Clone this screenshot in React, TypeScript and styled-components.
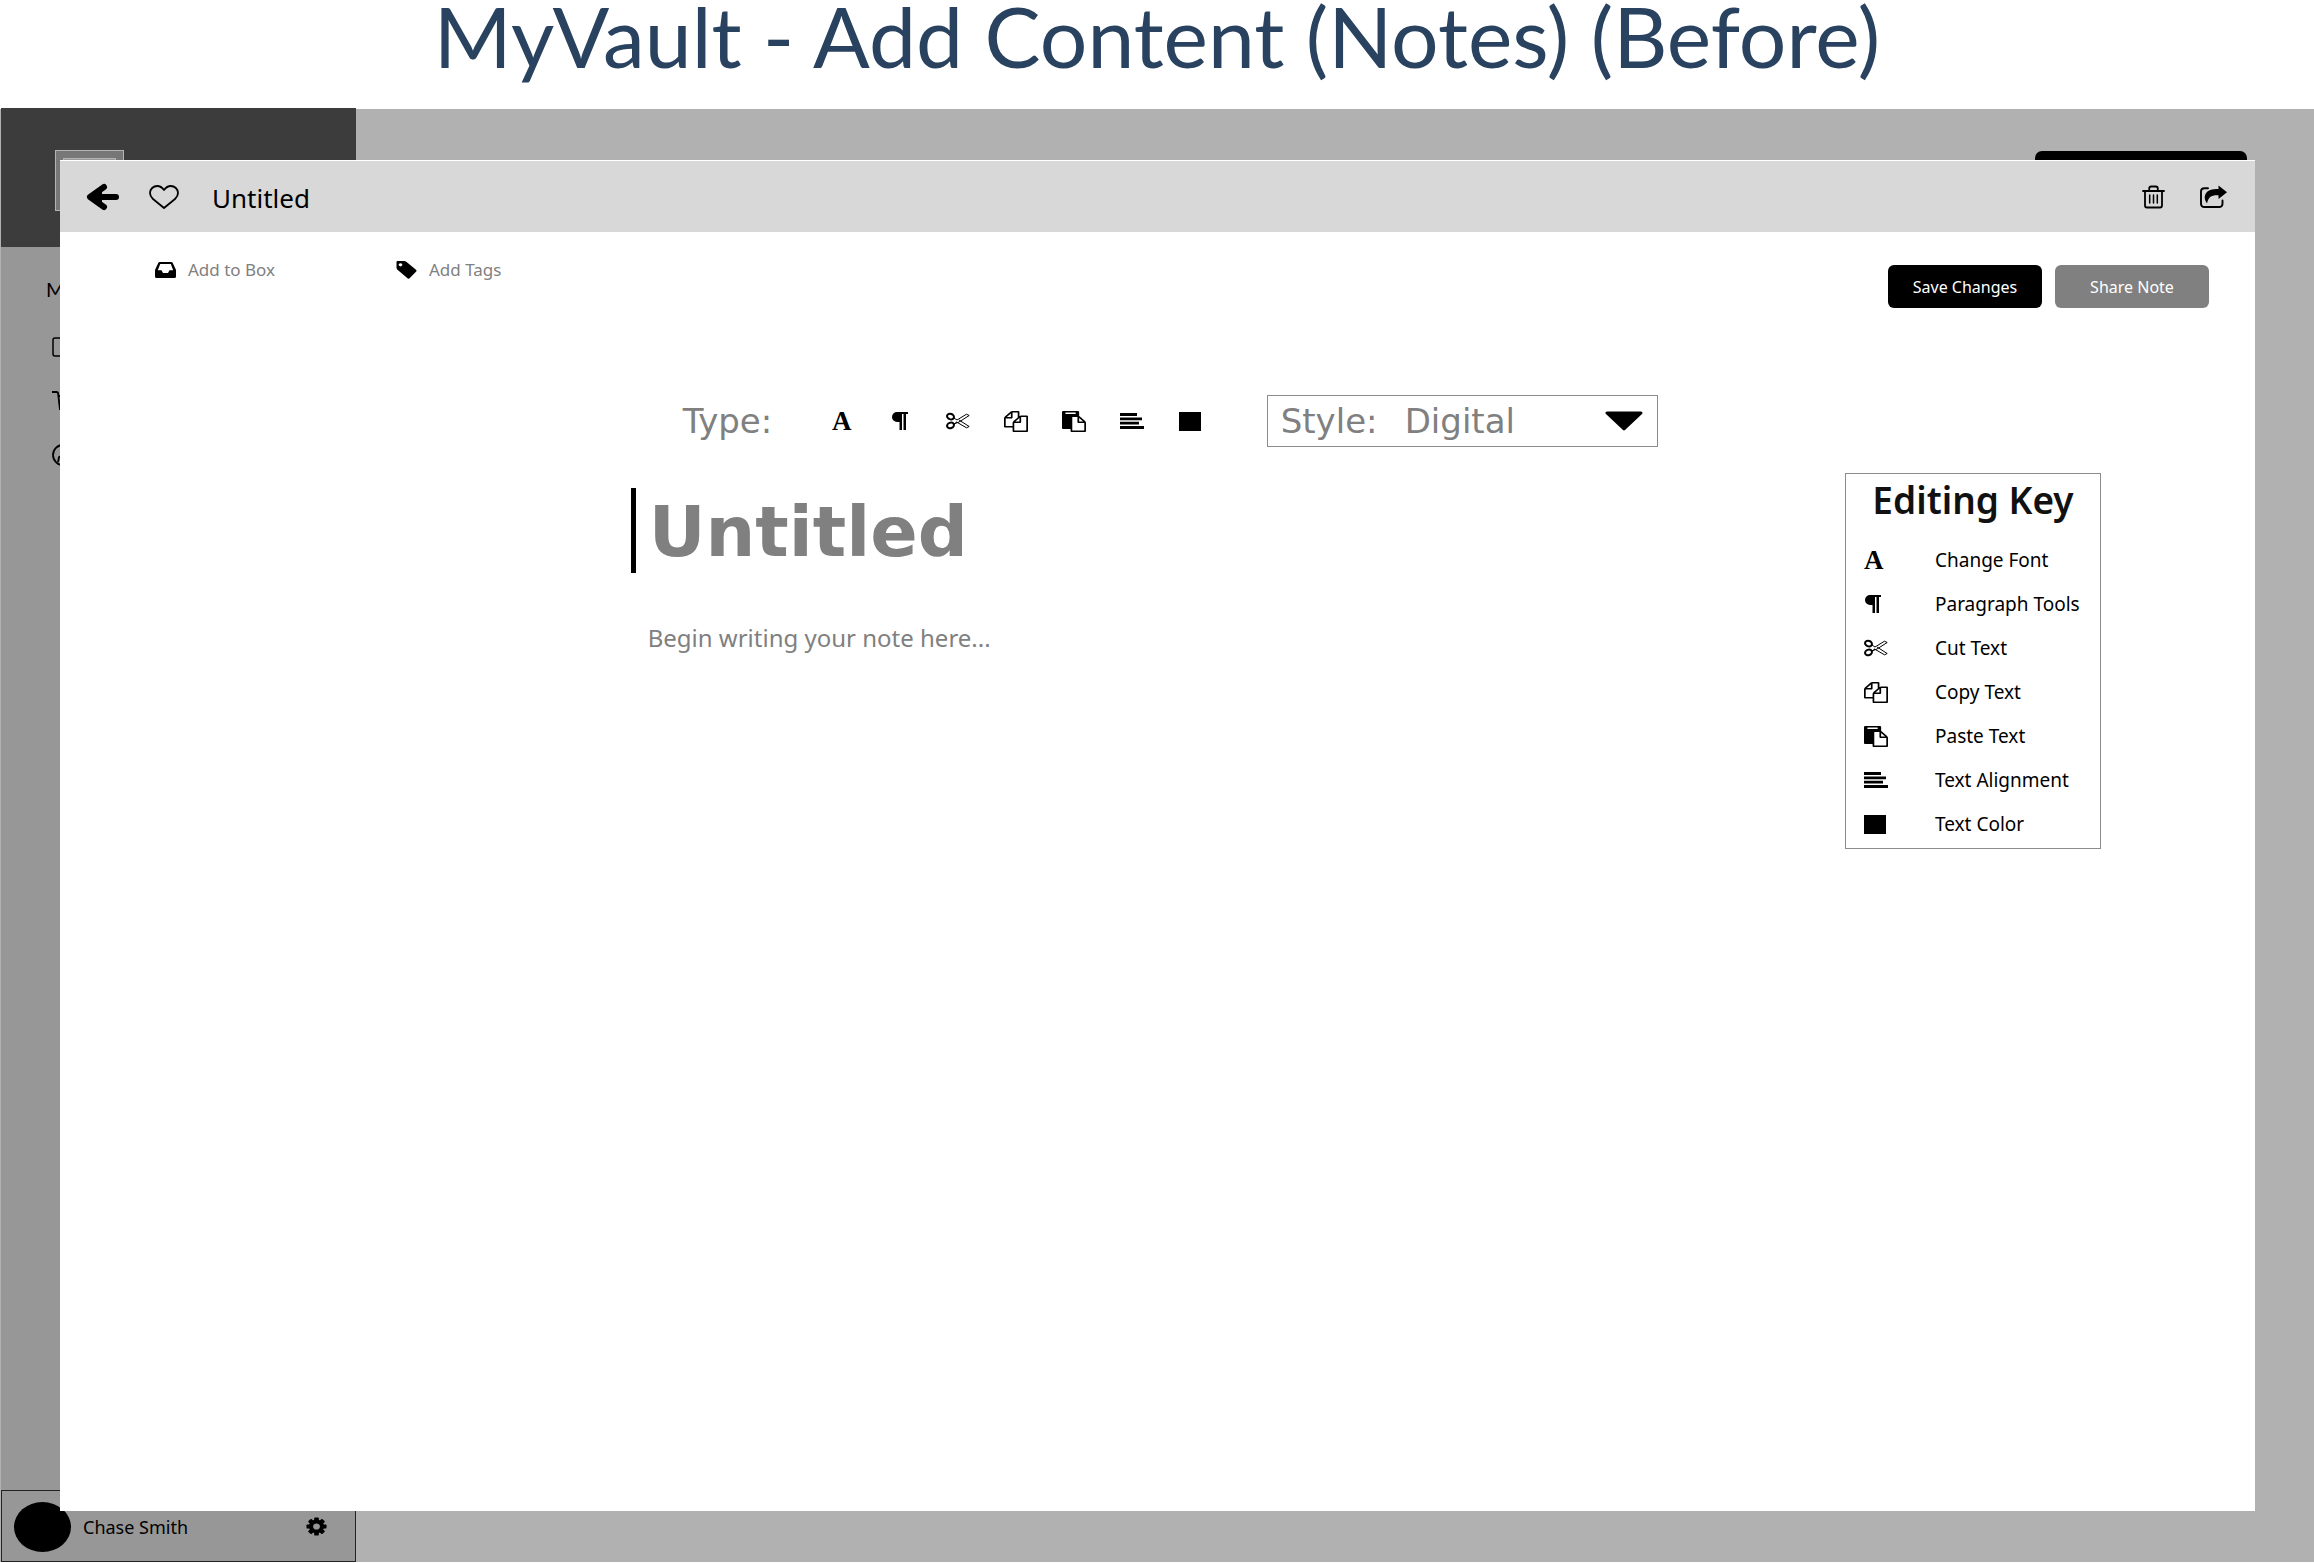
import React from 'react';
import styled, { createGlobalStyle } from 'styled-components';

const GlobalStyle = createGlobalStyle`
  *, *::before, *::after { box-sizing: border-box; }
  html, body, #root { margin: 0; height: 100%; }
  body { background: #fff; color: #000; font-family: "Noto Sans", sans-serif; }
  button, input, select, textarea { font: inherit; color: inherit; }
  svg { display: block; flex: none; }
`;

const ink = '#808080';

const Page = styled.div`
  min-height: 100%;
  display: flex;
  flex-direction: column;
  padding-bottom: 1px;
`;

const PageTitle = styled.h1`
  margin: 0;
  height: 108px;
  line-height: 72px;
  font-family: Lato, sans-serif;
  font-size: 84px;
  font-weight: 400;
  color: #29425f;
  text-align: center;
  white-space: nowrap;
`;

const Stage = styled.div`
  position: relative;
  flex: 1;
  display: flex;
  background: linear-gradient(#fff 1px, #b1b1b1 1px);
`;

const Sidebar = styled.aside`
  width: 355px;
  margin-left: 1px;
  display: flex;
  flex-direction: column;
  background: #979797;
`;

const Brand = styled.div`
  height: 139px;
  padding: 42px 54px;
  background: #3c3c3c;
`;

const Logo = styled.div`
  width: 69px;
  height: 61px;
  padding: 7px;
  border: 1px solid #b4b4b4;
  background: #777;
  &::before {
    content: '';
    display: block;
    height: 46px;
    border: 1px solid #b4b4b4;
    background: #999;
  }
`;

const Nav = styled.nav`
  flex: 1;
  padding: 28px 45px;
  display: flex;
  flex-direction: column;
  gap: 26px;
`;

const NavTitle = styled.span`
  margin-bottom: 4px;
  font-family: Lato, sans-serif;
  font-size: 20px;
  line-height: 28px;
`;

const NavLink = styled.a`
  display: flex;
  height: 28px;
  padding-left: 6px;
  align-items: center;
`;

const Account = styled.div`
  height: 72px;
  padding: 1px 28px 0 12px;
  display: flex;
  align-items: center;
  border: 1px solid #222;
`;

const Avatar = styled.span`
  width: 57px;
  height: 50px;
  margin-right: 12px;
  border-radius: 50%;
  background: #000;
`;

const AccountName = styled.span`
  flex: 1;
  font-size: 18px;
  line-height: 24px;
`;

const Canvas = styled.main`
  flex: 1;
  display: flex;
  justify-content: flex-end;
  align-items: flex-start;
  padding: 43px 67px;
`;

const CanvasAction = styled.button`
  width: 212px;
  height: 42px;
  border: 0;
  border-radius: 7px;
  background: #000;
`;

const Modal = styled.section`
  position: absolute;
  inset: 52px 59px 51px 60px;
  display: flex;
  flex-direction: column;
  border-top: 1px solid #fff;
  background: #fff;
`;

const ModalBar = styled.header`
  height: 71px;
  padding: 0 28px 0 25px;
  display: flex;
  align-items: center;
  background: #d8d8d8;
`;

const IconButton = styled.button`
  display: flex;
  align-items: center;
  justify-content: center;
  padding: 0;
  border: 0;
  background: none;
  cursor: pointer;
`;

const BarGroup = styled.div<{ $gap: number }>`
  display: flex;
  align-items: center;
  gap: ${(p) => p.$gap}px;
`;

const BarTitle = styled.h2`
  flex: 1;
  margin: 0;
  padding: 2px 0 0 33px;
  font-size: 26px;
  line-height: 32px;
  font-weight: 400;
`;

const MetaRow = styled.div`
  padding: 26px 46px 0 95px;
  display: flex;
  align-items: flex-start;
  justify-content: space-between;
`;

const MetaLinks = styled.div`
  display: flex;
`;

const MetaLink = styled.a`
  width: 241px;
  display: flex;
  align-items: center;
  gap: 12px;
  font-size: 17px;
  line-height: 24px;
  color: ${ink};
  text-decoration: none;
  svg { color: #000; }
`;

const Actions = styled.div`
  display: flex;
  gap: 13px;
  padding-top: 7px;
`;

const ActionButton = styled.button<{ $tone: string }>`
  width: 154px;
  height: 43px;
  padding: 0;
  border: 0;
  border-radius: 6px;
  background: ${(p) => p.$tone};
  color: #fff;
  font-size: 16px;
  cursor: pointer;
`;

const Workspace = styled.div`
  flex: 1;
  padding-top: 87px;
  display: grid;
  grid-template-columns: 26% 1fr 410px;
`;

const Editor = styled.div`
  grid-column: 2;
  display: flex;
  flex-direction: column;
  align-items: flex-start;
`;

const Toolbar = styled.div`
  height: 52px;
  padding-left: 52px;
  display: flex;
  align-items: center;
  font-family: "DejaVu Sans", sans-serif;
  font-size: 34px;
  line-height: 48px;
  color: ${ink};
`;

const TypeLabel = styled.span`
  width: 147px;
`;

const Tools = styled.div`
  display: flex;
  gap: 34px;
  margin-right: 65px;
  color: #000;
`;

const ToolButton = styled(IconButton)`
  width: 24px;
  height: 24px;
`;

const StyleField = styled.label`
  width: 391px;
  height: 52px;
  padding: 0 14px 0 13px;
  display: grid;
  grid-template-columns: 124px 1fr 38px;
  align-items: center;
  border: 1px solid #8c8c8c;
`;

const StyleSelect = styled.select`
  width: 100%;
  height: 48px;
  padding: 0;
  appearance: none;
  border: 0;
  background: none;
  line-height: 48px;
`;

const TitleInput = styled.input`
  width: 100%;
  height: 85px;
  margin-top: 41px;
  padding: 2px 0 0 13px;
  border: 0;
  border-left: 5px solid #000;
  background: none;
  font-family: "DejaVu Sans", sans-serif;
  font-size: 70px;
  font-weight: 700;
  color: ${ink};
  &::placeholder { color: ${ink}; opacity: 1; }
`;

const NoteInput = styled.textarea`
  width: 100%;
  flex: 1;
  margin-top: 49px;
  padding: 0 0 0 17px;
  border: 0;
  resize: none;
  background: none;
  font-size: 24px;
  line-height: 32px;
  &::placeholder { color: ${ink}; opacity: 1; }
`;

const KeyPanel = styled.aside`
  align-self: start;
  margin: 78px 154px 0 0;
  padding: 5px 0 2px 18px;
  border: 1px solid #8c8c8c;
`;

const KeyTitle = styled.h3`
  margin: 0 0 18px;
  padding-right: 18px;
  font-size: 37px;
  line-height: 41px;
  font-weight: 600;
  text-align: center;
  white-space: nowrap;
  color: #111;
`;

const KeyList = styled.ul`
  margin: 0;
  padding: 0;
  list-style: none;
`;

const KeyItem = styled.li`
  height: 44px;
  display: grid;
  grid-template-columns: 71px 1fr;
  align-items: center;
  font-size: 19px;
  line-height: 24px;
  white-space: nowrap;
`;

const Glyph = styled.span`
  font-family: "Liberation Serif", serif;
  font-size: 27px;
  line-height: 24px;
  font-weight: 700;
`;

const FontIcon = () => <Glyph aria-hidden="true">A</Glyph>;

const ParagraphIcon = () => (
  <svg width="18" height="18" viewBox="0 0 18 18" fill="currentColor">
    <path d="M6 0h11v2h-2v16h-2.500V2h-1.500v16H8.500V10H6A5 5 0 0 1 6 0z" />
  </svg>
);

const ScissorsIcon = () => (
  <svg width="24" height="18" viewBox="0 0 24 18" fill="none" stroke="currentColor">
    <ellipse cx="4.500" cy="4.600" rx="3.500" ry="2.700" strokeWidth="2" transform="rotate(20 4.500 4.600)" />
    <ellipse cx="4.500" cy="13.400" rx="3.500" ry="2.700" strokeWidth="2" transform="rotate(-20 4.500 13.400)" />
    <path d="M8 6l3 2L20.500 2.200l2.700 1.300L13 10 8 12M8 12l3-2M13 8l10.200 6.500-2.700 1.300L10.500 10" strokeWidth="1" strokeLinejoin="round" />
  </svg>
);

const CopyIcon = () => (
  <svg width="24" height="21" viewBox="0 0 1792 1792" preserveAspectRatio="none" fill="currentColor">
    <path d="M1696 384q40 0 68 28t28 68v1216q0 40-28 68t-68 28h-960q-40 0-68-28t-28-68v-288h-544q-40 0-68-28t-28-68v-672q0-40 20-88t48-76l408-408q28-28 76-48t88-20h416q40 0 68 28t28 68v328q68-40 128-40h416zm-544 213l-299 299h299v-299zm-640-384l-299 299h299v-299zm196 647l316-316v-416h-384v416q0 40-28 68t-68 28h-416v640h512v-256q0-40 20-88t48-76zm956 804v-1152h-384v416q0 40-28 68t-68 28h-416v640h896z" />
  </svg>
);

const PasteIcon = () => (
  <svg width="24" height="21" viewBox="0 0 1792 1792" preserveAspectRatio="none" fill="currentColor">
    <path d="M768 1664h896v-640h-416q-40 0-68-28t-28-68v-416h-384v1152zm256-1440v-64q0-13-9.500-22.500t-22.500-9.500h-704q-13 0-22.500 9.500t-9.500 22.500v64q0 13 9.500 22.500t22.500 9.500h704q13 0 22.500-9.500t9.500-22.500zm256 672h299l-299-299v299zm512 128v672q0 40-28 68t-68 28h-960q-40 0-68-28t-28-68v-160h-544q-40 0-68-28t-28-68v-1344q0-40 28-68t68-28h1088q40 0 68 28t28 68v328q21 13 36 28l408 408q28 28 48 76t20 88z" />
  </svg>
);

const AlignIcon = () => (
  <svg width="24" height="18" viewBox="0 0 24 18" stroke="currentColor" strokeWidth="2.800">
    <path d="M0 2.500h17M0 6.800h22M0 11.200h19M0 15.500h24" />
  </svg>
);

const SwatchIcon = () => (
  <svg width="22" height="19" viewBox="0 0 22 19">
    <rect width="22" height="19" fill="currentColor" />
  </svg>
);

const BackIcon = () => (
  <svg width="34" height="28" viewBox="0 0 34 28" fill="none" stroke="currentColor" strokeLinecap="round">
    <path d="M8 14h23" strokeWidth="6" />
    <path d="M19 4L5 14l14 10" strokeWidth="6" strokeLinejoin="round" />
    <path d="M4 14L17 5v18z" fill="currentColor" stroke="none" />
  </svg>
);

const HeartIcon = () => (
  <svg width="30" height="24" viewBox="0 0 30 24" fill="none" stroke="currentColor" strokeWidth="1.800" strokeLinejoin="round">
    <path d="M15 5C13 2.300 10.800 1 8.300 1 4.300 1 1 4 1 8c0 2.600 1.300 4.400 3 6l11 9 11-9c1.700-1.600 3-3.400 3-6 0-4-3.300-7-7.300-7C19.200 1 17 2.300 15 5z" />
  </svg>
);

const TrashIcon = () => (
  <svg width="23" height="24" viewBox="0 0 23 24" fill="none" stroke="currentColor" strokeWidth="1.800" strokeLinecap="round" strokeLinejoin="round">
    <path d="M1 6h21M7.200 6V3.500Q7.200 1.500 9.200 1.500h4.600q2 0 2 2V6" />
    <path d="M3 6v14.500Q3 22.500 5 22.500h13q2 0 2-2V6" />
    <path d="M7.700 10v8M11.500 10v8M15.300 10v8" strokeWidth="1.500" />
  </svg>
);

const ShareIcon = () => (
  <svg width="28" height="24" viewBox="0 0 28 24">
    <path d="M9 3.200H5.500Q2 3.200 2 6.500v12Q2 22 5.500 22H20q3.500 0 3.500-3.500V15.500" fill="none" stroke="currentColor" strokeWidth="1.900" strokeLinecap="round" />
    <path d="M19.500 0.500L28 7.200 19.500 14V10.300C12 10 9.500 12 8 18.500 5.500 15 5 12 6.500 9 8.500 5.200 13 4 19.500 4z" fill="currentColor" />
  </svg>
);

const InboxIcon = () => (
  <svg width="21" height="16" viewBox="0 0 21 16" fill="currentColor" fillRule="evenodd">
    <path d="M5 0h11q1.500 0 2 1.400L21 8v6.500Q21 16 19.500 16h-18Q0 16 0 14.500V8L3 1.400Q3.500 0 5 0zM5.200 2L2.800 8.200H6.500L8 11h5l1.500-2.800h3.700L15.800 2z" />
  </svg>
);

const TagIcon = () => (
  <svg width="21" height="18" viewBox="0 0 21 18" fill="currentColor" fillRule="evenodd">
    <path d="M1.500 0H8q1.500 0 2.600.9L20 8.800q1 .9 0 2l-6.500 6.400q-1 1-2 .1L1.200 8.500Q.5 7.700.5 6.500V1Q.5 0 1.500 0zM4.500 2.200a1.800 1.600 0 1 0 .01 0z" />
  </svg>
);

const CaretIcon = () => (
  <svg width="38" height="20" viewBox="0 0 38 20">
    <path d="M2 2h34L19 18z" fill="#000" stroke="#000" strokeWidth="3" strokeLinejoin="round" />
  </svg>
);

const GearIcon = () => (
  <svg width="21" height="19" viewBox="-10.500 -10.500 21 21" preserveAspectRatio="none">
    {[0, 45, 90, 135].map((a) => (
      <rect key={a} x="-2.300" y="-10" width="4.600" height="20" rx="1" transform={`rotate(${a})`} />
    ))}
    <circle r="7.600" />
    <circle r="3.400" fill="#979797" />
  </svg>
);

const BoxIcon = () => (
  <svg width="22" height="20" viewBox="0 0 22 20" fill="none" stroke="#000" strokeWidth="1.500">
    <rect x="1" y="1" width="20" height="18" rx="2" />
  </svg>
);

const CartIcon = () => (
  <svg width="22" height="20" viewBox="0 0 22 20" fill="none" stroke="#000" strokeWidth="1.800">
    <path d="M0 1h4.500q1.500 0 1.700 2L8 19M7 5h14l-2 8H8" />
  </svg>
);

const DialIcon = () => (
  <svg width="22" height="22" viewBox="0 0 22 22" fill="none" stroke="#000" strokeWidth="1.800">
    <circle cx="11" cy="11" r="10" />
    <path d="M6 18l1-5 4-2" />
  </svg>
);

const tools = [
  { label: 'Change Font', Icon: FontIcon },
  { label: 'Paragraph Tools', Icon: ParagraphIcon },
  { label: 'Cut Text', Icon: ScissorsIcon },
  { label: 'Copy Text', Icon: CopyIcon },
  { label: 'Paste Text', Icon: PasteIcon },
  { label: 'Text Alignment', Icon: AlignIcon },
  { label: 'Text Color', Icon: SwatchIcon },
];

export default function App() {
  return (
    <Page>
      <GlobalStyle />
      <PageTitle>MyVault - Add Content (Notes) (Before)</PageTitle>
      <Stage>
        <Sidebar>
          <Brand><Logo /></Brand>
          <Nav>
            <NavTitle>M</NavTitle>
            <NavLink href="#boxes" aria-label="Boxes"><BoxIcon /></NavLink>
            <NavLink href="#cart" aria-label="Cart"><CartIcon /></NavLink>
            <NavLink href="#activity" aria-label="Activity"><DialIcon /></NavLink>
          </Nav>
          <Account>
            <Avatar />
            <AccountName>Chase Smith</AccountName>
            <IconButton aria-label="Settings"><GearIcon /></IconButton>
          </Account>
        </Sidebar>
        <Canvas><CanvasAction aria-label="Add content" /></Canvas>

        <Modal>
          <ModalBar>
            <BarGroup $gap={30}>
              <IconButton aria-label="Back"><BackIcon /></IconButton>
              <IconButton aria-label="Favorite"><HeartIcon /></IconButton>
            </BarGroup>
            <BarTitle>Untitled</BarTitle>
            <BarGroup $gap={34}>
              <IconButton aria-label="Delete"><TrashIcon /></IconButton>
              <IconButton aria-label="Share"><ShareIcon /></IconButton>
            </BarGroup>
          </ModalBar>

          <MetaRow>
            <MetaLinks>
              <MetaLink href="#box"><InboxIcon />Add to Box</MetaLink>
              <MetaLink href="#tags"><TagIcon />Add Tags</MetaLink>
            </MetaLinks>
            <Actions>
              <ActionButton $tone="#000">Save Changes</ActionButton>
              <ActionButton $tone={ink}>Share Note</ActionButton>
            </Actions>
          </MetaRow>

          <Workspace>
            <Editor>
              <Toolbar>
                <TypeLabel>Type:</TypeLabel>
                <Tools>
                  {tools.map(({ label, Icon }) => (
                    <ToolButton key={label} aria-label={label}><Icon /></ToolButton>
                  ))}
                </Tools>
                <StyleField>
                  Style:
                  <StyleSelect defaultValue="Digital">
                    <option>Digital</option>
                  </StyleSelect>
                  <CaretIcon />
                </StyleField>
              </Toolbar>
              <TitleInput aria-label="Note title" placeholder="Untitled" />
              <NoteInput aria-label="Note text" placeholder="Begin writing your note here..." />
            </Editor>
            <KeyPanel>
              <KeyTitle>Editing Key</KeyTitle>
              <KeyList>
                {tools.map(({ label, Icon }) => (
                  <KeyItem key={label}><Icon />{label}</KeyItem>
                ))}
              </KeyList>
            </KeyPanel>
          </Workspace>
        </Modal>
      </Stage>
    </Page>
  );
}
